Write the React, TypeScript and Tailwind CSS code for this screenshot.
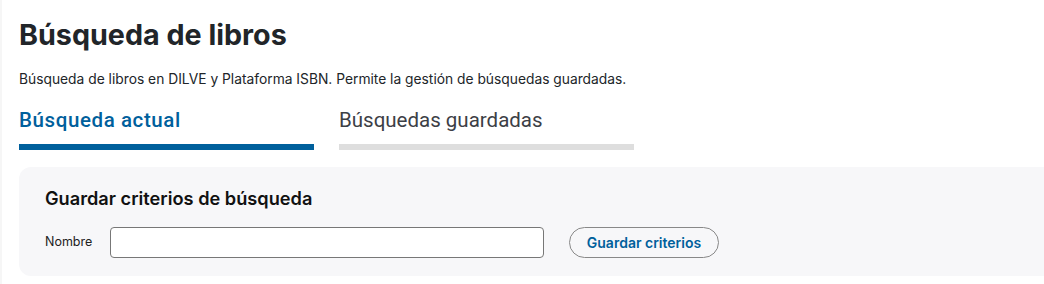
import { useState } from "react";

const App = () => {
  const [tab, setTab] = useState<"actual" | "guardadas">("actual");
  const [nombre, setNombre] = useState("");

  return (
    <div className="min-h-screen bg-white overflow-hidden border-l-2 border-[#f6f6f6]">
      <div className="pl-[17px] pt-[19px]">
        <h1 className="text-[28.7px] leading-[32px] font-bold text-[#212529] font-['Inter',sans-serif]">
          Búsqueda de libros
        </h1>
        <p className="mt-[19px] text-[13.8px] leading-[18px] text-[#212529] font-['Inter',sans-serif]">
          Búsqueda de libros en DILVE y Plataforma ISBN. Permite la gestión de búsquedas guardadas.
        </p>

        <div className="mt-[18px] flex gap-[25px]">
          <button
            onClick={() => setTab("actual")}
            className="w-[295px] text-left font-['Roboto',sans-serif]"
          >
            <span
              className={`block text-[20.5px] leading-[28px] ${
                tab === "actual"
                  ? "text-[#00609c] font-medium tracking-[0.6px]"
                  : "text-[#3c4046]"
              }`}
            >
              Búsqueda actual
            </span>
            <span
              className={`mt-[10px] block h-[6px] ${
                tab === "actual" ? "bg-[#00609c]" : "bg-[#dedede]"
              }`}
            />
          </button>
          <button
            onClick={() => setTab("guardadas")}
            className="w-[295px] text-left font-['Roboto',sans-serif]"
          >
            <span
              className={`block text-[20.5px] leading-[28px] ${
                tab === "guardadas"
                  ? "text-[#00609c] font-medium tracking-[0.6px]"
                  : "text-[#3c4046]"
              }`}
            >
              Búsquedas guardadas
            </span>
            <span
              className={`mt-[10px] block h-[6px] ${
                tab === "guardadas" ? "bg-[#00609c]" : "bg-[#dedede]"
              }`}
            />
          </button>
        </div>

        <div className="mt-[17px] w-[1060px] rounded-[12px] bg-[#f7f7f9] px-[26px] pt-[20px] pb-[18px] font-['Inter',sans-serif]">
          <h2 className="text-[18.2px] leading-[22px] font-semibold text-[#111]">
            Guardar criterios de búsqueda
          </h2>
          <div className="mt-[18px] flex items-center">
            <label htmlFor="nombre" className="text-[12.5px] text-[#222] w-[65px]">
              Nombre
            </label>
            <input
              id="nombre"
              value={nombre}
              onChange={(e) => setNombre(e.target.value)}
              className="h-[31px] w-[434px] rounded-[4px] border border-[#777] bg-white px-2 text-[13px] outline-none"
            />
            <button className="ml-[25px] h-[31px] w-[150px] rounded-full border border-[#888] bg-transparent text-[14px] font-semibold text-[#00609c]">
              Guardar criterios
            </button>
          </div>
        </div>
      </div>
    </div>
  );
};

export default App;
